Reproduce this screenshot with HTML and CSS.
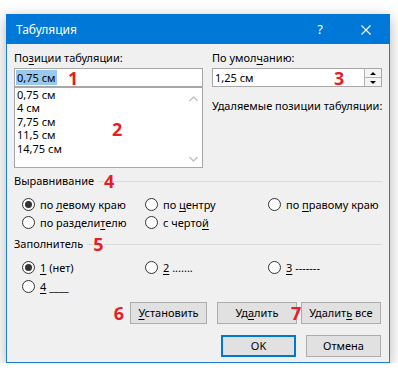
FILE: index.html
```html
<!DOCTYPE html>
<html lang="ru">
<head>
    <meta charset="UTF-8">
    <title>Табуляция</title>
    <link rel="stylesheet" href="styles.css">
</head>
<body>
    <div class="window">
        <div class="titlebar">
            <span class="title">Табуляция</span>
            <span class="help">?</span>
            <svg class="close" width="10" height="10" viewBox="0 0 10 10">
                <path d="M0.5 0.5 L9.5 9.5 M9.5 0.5 L0.5 9.5" stroke="#fff" stroke-width="1.1" fill="none"/>
            </svg>
        </div>
        <div class="content">
            <div class="top">
                <div class="col-left">
                    <div class="label">По<u>з</u>иции табуляции:</div>
                    <div class="field">
                        <span class="sel">0,75 см</span>
                        <span class="num num-1">1</span>
                    </div>
                    <div class="list">
                        <div class="items">
                            <div>0,75 см</div>
                            <div>4 см</div>
                            <div>7,75 см</div>
                            <div>11,5 см</div>
                            <div>14,75 см</div>
                        </div>
                        <div class="scroll">
                            <svg width="9" height="6" viewBox="0 0 9 6"><path d="M0.5 5 L4.5 1 L8.5 5" stroke="#c2c2c2" stroke-width="1.4" fill="none"/></svg>
                            <svg width="9" height="6" viewBox="0 0 9 6"><path d="M0.5 1 L4.5 5 L8.5 1" stroke="#c2c2c2" stroke-width="1.4" fill="none"/></svg>
                        </div>
                        <span class="num num-2">2</span>
                    </div>
                </div>
                <div class="col-right">
                    <div class="label">По умол<u>ч</u>анию:</div>
                    <div class="field">
                        <span>1,25 см</span>
                        <span class="num num-3">3</span>
                        <div class="spin">
                            <span class="up"></span>
                            <span class="down"></span>
                        </div>
                    </div>
                    <div class="label del-label">Удаляемые позиции табуляции:</div>
                </div>
            </div>

            <div class="group-head">Выравнивание<i class="rule short"></i><span class="num">4</span><i class="rule"></i></div>
            <div class="radios">
                <div class="opt"><span class="radio on"></span><span>по <u>л</u>евому краю</span></div>
                <div class="opt"><span class="radio"></span><span>по <u>ц</u>ентру</span></div>
                <div class="opt"><span class="radio"></span><span>по <u>п</u>равому краю</span></div>
                <div class="opt"><span class="radio"></span><span>по раздели<u>т</u>елю</span></div>
                <div class="opt"><span class="radio"></span><span>с черто<u>й</u></span></div>
            </div>

            <div class="group-head">Заполнитель<i class="rule short"></i><span class="num">5</span><i class="rule"></i></div>
            <div class="radios fill">
                <div class="opt"><span class="radio on"></span><span><u>1</u> (нет)</span></div>
                <div class="opt"><span class="radio"></span><span><u>2</u> .......</span></div>
                <div class="opt"><span class="radio"></span><span><u>3</u> -------</span></div>
                <div class="opt"><span class="radio"></span><span><u>4</u> ____</span></div>
            </div>

            <div class="buttons">
                <span class="num num-6">6</span>
                <button class="btn btn-set"><u>У</u>становить</button>
                <button class="btn btn-del">Уд<u>а</u>лить</button>
                <span class="num num-7">7</span>
                <button class="btn btn-del">Удалит<u>ь</u> все</button>
            </div>
            <div class="buttons bottom">
                <button class="btn btn-ok">OK</button>
                <button class="btn btn-ok">Отмена</button>
            </div>
        </div>
    </div>
</body>
</html>
```

FILE: styles.css
```css
body {
    margin: 0;
    padding: 14px 0 0 6px;
    background: #fff;
    font-family: "Noto Sans", "Segoe UI", sans-serif;
    font-size: 11px;
    color: #000;
}
u {
    text-decoration: underline;
    text-underline-offset: 2px;
}
.window {
    width: 382px;
    height: 348px;
    border: 1px solid #1a7fd6;
    border-top: none;
    background: #f0f0f0;
    box-shadow: 0 4px 14px rgba(0, 0, 0, 0.3);
}
.titlebar {
    height: 30px;
    margin: 0 -1px;
    background: #0078d7;
    color: #fff;
    display: flex;
    align-items: center;
}
.title {
    padding-left: 10px;
    flex: 1;
    font-size: 12px;
    line-height: 16px;
    margin-top: 1px;
}
.help {
    font-size: 13px;
    margin-right: 38px;
    margin-top: -1px;
}
.close {
    margin-right: 19px;
    margin-top: 1px;
}
.content {
    padding: 6px 7px 0 7px;
}
.top {
    display: flex;
    gap: 9px;
}
.col-left {
    width: 189px;
}
.col-right {
    width: 170px;
}
.label {
    line-height: 16px;
    margin-bottom: 2px;
    white-space: nowrap;
}
.del-label {
    margin-top: 11px;
}
.field {
    position: relative;
    height: 19px;
    box-sizing: border-box;
    border: 1px solid #a8a8a8;
    background: #fff;
    padding-left: 2px;
    line-height: 16px;
    display: flex;
    align-items: center;
}
.sel {
    background: #99c9ef;
    margin-left: -1px;
    padding: 0 1px;
    line-height: 15px;
}
.num {
    color: #ea1c24;
    font-family: "Open Sans", "Noto Sans", sans-serif;
    font-weight: bold;
    font-size: 18px;
    line-height: 18px;
}
.num-1 {
    position: absolute;
    left: 53px;
    top: 0;
}
.num-3 {
    position: absolute;
    left: 121px;
    top: 0;
}
.num-2 {
    position: absolute;
    left: 97px;
    top: 32px;
}
.spin {
    position: absolute;
    right: 0;
    top: 0;
    width: 16px;
    height: 17px;
    border-left: 1px solid #b4b4b4;
    background: #f4f4f4;
    display: flex;
    flex-direction: column;
}
.spin span {
    flex: 1;
    display: flex;
    align-items: center;
    justify-content: center;
}
.spin .up {
    border-bottom: 1px solid #b4b4b4;
}
.spin .up::after {
    content: "";
    border: 3px solid transparent;
    border-bottom: 3px solid #000;
    border-top: none;
}
.spin .down::after {
    content: "";
    border: 3px solid transparent;
    border-top: 3px solid #000;
    border-bottom: none;
}
.list {
    position: relative;
    height: 81px;
    box-sizing: border-box;
    border: 1px solid #a8a8a8;
    background: #fff;
    display: flex;
}
.items {
    flex: 1;
    padding: 0 0 0 2px;
    line-height: 13.4px;
}
.scroll {
    width: 17px;
    display: flex;
    flex-direction: column;
    justify-content: space-between;
    align-items: center;
    padding: 8px 0 5px;
}
.group-head {
    margin-top: 4px;
    line-height: 16px;
    display: flex;
    align-items: center;
}
.rule {
    flex: 1;
    border-top: 1px solid #dadada;
    margin-top: 1px;
}
.rule.short {
    flex: none;
    width: 6px;
    margin-left: 4px;
}
.group-head .num {
    width: 9px;
}
.radios {
    margin-top: 5px;
    padding-left: 8px;
    display: grid;
    grid-template-columns: 123px 123px auto;
    grid-auto-rows: 18px;
}
.radios.fill {
    row-gap: 1px;
}
.fill + .buttons {
    margin-top: 7px;
}
.opt {
    display: flex;
    align-items: center;
    gap: 5px;
    white-space: nowrap;
}
.radio {
    width: 13px;
    height: 13px;
    box-sizing: border-box;
    border: 1px solid #333;
    border-radius: 50%;
    background: #fff;
    display: flex;
    align-items: center;
    justify-content: center;
}
.radio.on::after {
    content: "";
    width: 7px;
    height: 7px;
    border-radius: 50%;
    background: #333;
}
.buttons {
    display: flex;
    justify-content: flex-end;
    align-items: center;
    margin-right: 1px;
}
.btn {
    font-family: inherit;
    font-size: 11px;
    color: #000;
    height: 22px;
    padding: 0;
    border: 1px solid #adadad;
    background: #e1e1e1;
    line-height: 18px;
}
.btn-set {
    width: 77px;
    margin-left: 6px;
    margin-right: 10px;
}
.btn-del {
    width: 80px;
}
.num-7 {
    width: 10px;
    margin-left: -6px;
    position: relative;
}
.bottom {
    margin-top: 11px;
    gap: 10px;
}
.btn-ok {
    width: 75px;
}
.btn-ok:first-child {
    border: 2px solid #0078d7;
}
```
